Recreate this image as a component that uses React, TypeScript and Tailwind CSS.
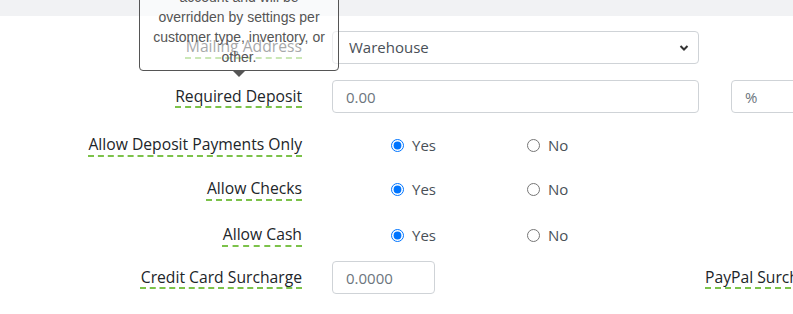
import React from "react";

const labelCls =
  "w-[302px] shrink-0 text-right text-[15.7px] font-medium text-[#212529] whitespace-nowrap";
const underline =
  "underline decoration-dashed decoration-[#7cc24a] decoration-2 underline-offset-[5px]";
const inputCls =
  "h-[33px] shrink-0 rounded-[4px] border border-[#cfd3d7] bg-white px-[13px] text-[15px] text-[#6c757d] outline-none";

function RadioRow({ label, name }: { label: string; name: string }) {
  return (
    <div className="flex items-center h-[24px]">
      <div className={labelCls}>
        <span className={underline}>{label}</span>
      </div>
      <div className="ml-[89px] flex items-center w-[136px]">
        <input type="radio" name={name} defaultChecked className="w-[13px] h-[13px] m-0" />
        <span className="ml-[8px] text-[15px] text-[#495057]">Yes</span>
      </div>
      <div className="flex items-center">
        <input type="radio" name={name} className="w-[13px] h-[13px] m-0" />
        <span className="ml-[8px] text-[15px] text-[#495057]">No</span>
      </div>
    </div>
  );
}

export default function App() {
  return (
    <div
      className="relative w-[793px] h-[314px] overflow-hidden bg-white"
      style={{ fontFamily: '"Open Sans", "Noto Sans", sans-serif' }}
    >
      <div className="h-[16px] bg-[#f1f2f4]" />

      {/* Mailing address */}
      <div className="flex items-center mt-[14px] h-[34px]">
        <div className={labelCls}>
          <span className={underline}>Mailing Address</span>
        </div>
        <div className="ml-[30px] relative w-[367px] shrink-0">
          <select className={`${inputCls} w-full appearance-none text-[#495057] px-[16px]`} defaultValue="Warehouse">
            <option>Warehouse</option>
          </select>
          <svg
            className="absolute right-[10px] top-[13px] pointer-events-none"
            width="10"
            height="8"
            viewBox="0 0 10 8"
          >
            <path d="M1.5 2 L5 5.5 L8.5 2" stroke="#333" strokeWidth="2" fill="none" />
          </svg>
        </div>
      </div>

      {/* Required deposit */}
      <div className="flex items-center mt-[16px] h-[33px]">
        <div className={labelCls}>
          <span className={underline}>Required Deposit</span>
        </div>
        <input className={`${inputCls} ml-[30px] w-[367px]`} defaultValue="0.00" />
        <input className={`${inputCls} ml-[32px] w-[120px]`} defaultValue="%" />
      </div>

      <div className="mt-[20px]">
        <RadioRow label="Allow Deposit Payments Only" name="dep" />
      </div>
      <div className="mt-[20px]">
        <RadioRow label="Allow Checks" name="chk" />
      </div>
      <div className="mt-[22px]">
        <RadioRow label="Allow Cash" name="cash" />
      </div>

      {/* Surcharges */}
      <div className="flex items-center mt-[14px] h-[33px]">
        <div className={labelCls}>
          <span className={underline}>Credit Card Surcharge</span>
        </div>
        <input className={`${inputCls} ml-[30px] w-[103px]`} defaultValue="0.0000" />
        <div className="ml-[270px] text-[15.7px] font-medium text-[#212529] whitespace-nowrap">
          <span className={underline}>PayPal Surcharge</span>
        </div>
      </div>

      {/* Tooltip */}
      <div
        className="absolute left-[139px] top-[-16px] w-[200px] rounded-[4px] border border-[#555] bg-white/60 px-[8px] pt-[2px] pb-[3px] text-center text-[14px] leading-[20px] text-[#555]"
        style={{ fontFamily: '"Liberation Sans", Arial, sans-serif' }}
      >
        account and will be overridden by settings per customer type, inventory, or other.
        <div className="absolute left-1/2 -translate-x-1/2 bottom-[-7px] w-0 h-0 border-l-[6px] border-r-[6px] border-t-[6px] border-l-transparent border-r-transparent border-t-[#555]" />
      </div>
    </div>
  );
}
